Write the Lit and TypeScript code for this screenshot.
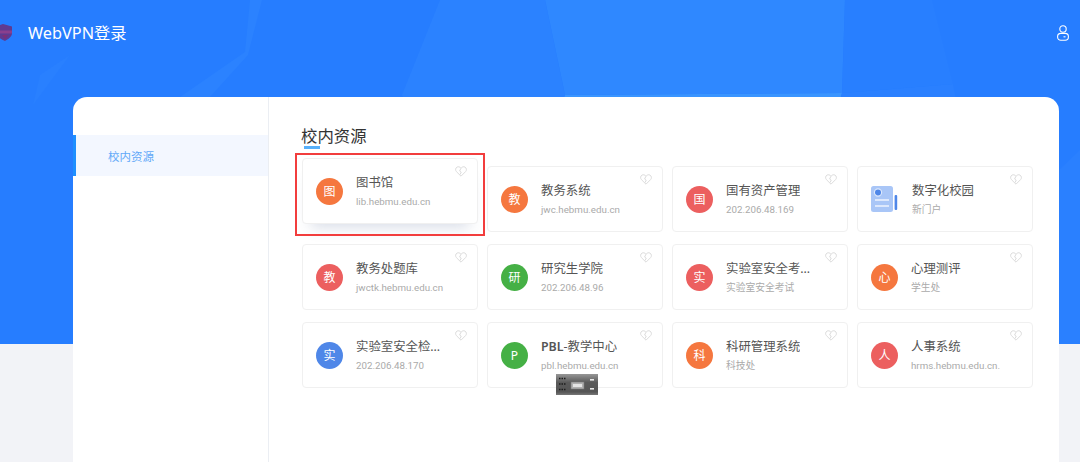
import { LitElement, html, css, svg } from "lit";
import { customElement } from "lit/decorators.js";

type Item = { title: string; sub: string; glyph?: string; color?: string; hover?: boolean; doc?: boolean; prefix?: string };

const O = "#f5773f", R = "#ec5f5f", B = "#4f87e8", G = "#45b045";
const items: Item[] = [
  { title: "图书馆", sub: "lib.hebmu.edu.cn", glyph: "图", color: O, hover: true },
  { title: "教务系统", sub: "jwc.hebmu.edu.cn", glyph: "教", color: O },
  { title: "国有资产管理", sub: "202.206.48.169", glyph: "国", color: R },
  { title: "数字化校园", sub: "新门户", doc: true },
  { title: "教务处题库", sub: "jwctk.hebmu.edu.cn", glyph: "教", color: R },
  { title: "研究生学院", sub: "202.206.48.96", glyph: "研", color: G },
  { title: "实验室安全考试", sub: "实验室安全考试", glyph: "实", color: R },
  { title: "心理测评", sub: "学生处", glyph: "心", color: O },
  { title: "实验室安全检查", sub: "202.206.48.170", glyph: "实", color: B },
  { title: "-教学中心", prefix: "PBL", sub: "pbl.hebmu.edu.cn", glyph: "P", color: G },
  { title: "科研管理系统", sub: "科技处", glyph: "科", color: O },
  { title: "人事系统", sub: "hrms.hebmu.edu.cn.", glyph: "人", color: R },
];

const heart = html`<svg class="heart" viewBox="0 0 12 11" width="12" height="11" fill="none" stroke="#dcdcdc" stroke-width="1">
  <path d="M6 10.2 1.4 5.6C.1 4.2.4 2 2 1.1 3.4.4 5 .8 6 2.2 7 .8 8.6.4 10 1.1c1.6.9 1.9 3.1.6 4.5Z"/>
  <path d="M6 2.2 4.6 5l1.6 1.2L5 8.6"/>
</svg>`;

const doc = html`<svg class="doc" viewBox="0 0 27 27" width="27" height="27">
  <rect x="0" y="0" width="22" height="26" rx="2.5" fill="#a9c6f7"/>
  <circle cx="7" cy="6.5" r="3.6" fill="#4f87e8" stroke="#dbe7fb" stroke-width="1.2"/>
  <rect x="4" y="13.2" width="14" height="1.6" fill="#eaf1fd"/>
  <rect x="4" y="19.2" width="14" height="1.6" fill="#eaf1fd"/>
  <rect x="23.6" y="9" width="2.6" height="15" rx="1" fill="#4f87e8"/>
</svg>`;

const bg = svg`
  <rect width="1080" height="344" fill="#267dff"/>
  <polygon points="565,95 842,93 827,146 542,146" fill="#3a95ff"/>
  <polygon points="545,0 845,0 842,93 565,95" fill="#2f88ff"/>
  <polygon points="440,0 545,0 565,95 402,95" fill="#2b82ff"/>
  <polygon points="402,95 565,95 542,146 427,146" fill="#2b82ff"/>
  <polygon points="842,93 953,84 965,146 827,146" fill="#2a80ff"/>
  <polygon points="845,0 932,0 953,84 842,93" fill="#287fff"/>
  <polygon points="250,0 262,0 248,55 210,97 180,97 245,52" fill="#2b82ff"/>
  <polygon points="33,105 70,55 40,75" fill="#2980ff"/>
  <polygon points="1059,170 1080,150 1080,344 1059,344" fill="#2a80ff"/>
`;

@customElement("app-root")
export class AppRoot extends LitElement {
  static styles = css`
    :host {
      display: flex;
      flex-direction: column;
      position: relative;
      height: 100vh;
      overflow: hidden;
      background: #f2f3f7;
      font-family: "Noto Sans", "Noto Sans CJK SC", sans-serif;
    }
    .hero { position: absolute; left: 0; top: 0; width: 100%; height: 344px; display: block; }
    header {
      position: relative;
      height: 97px;
      flex: none;
      box-sizing: border-box;
      padding: 23px 11px 0 0;
      display: flex;
      align-items: flex-start;
      color: #fff;
    }
    .logo { width: 13px; height: 17px; margin: 1px 15px 0 0; flex: none; }
    .brand { font-size: 16.3px; line-height: 18px; margin-top: 1px; }
    .user { margin-left: auto; width: 12px; height: 16px; margin-top: 2px; }
    .panel {
      position: relative;
      flex: 1;
      margin: 0 21px 0 73px;
      background: #fff;
      border-radius: 14px 14px 0 0;
      display: flex;
    }
    nav { width: 195px; flex: none; padding-top: 38px; border-right: 1px solid #ebeef3; }
    .nav-item {
      height: 41px;
      box-sizing: border-box;
      border-left: 3px solid #1e8fff;
      background: #f3f7ff;
      padding-left: 32px;
      display: flex;
      align-items: center;
      font-size: 11.5px;
      color: #62a9f8;
    }
    main { flex: 1; padding: 27px 0 0 33px; }
    h2 {
      margin: 0 0 0 -1px;
      width: max-content;
      font-size: 16.4px;
      line-height: 24px;
      font-weight: 400;
      color: #333;
      position: relative;
    }
    h2::after {
      content: "";
      position: absolute;
      left: 3px;
      bottom: -1px;
      width: 16px;
      height: 3px;
      background: #58b0fa;
    }
    .grid {
      margin-top: 18px;
      display: grid;
      grid-template-columns: repeat(4, 176px);
      grid-auto-rows: 66px;
      column-gap: 9px;
      row-gap: 12px;
    }
    .card {
      position: relative;
      box-sizing: border-box;
      border: 1px solid #f0f0f0;
      border-radius: 4px;
      background: #fff;
      display: flex;
      align-items: center;
      padding-left: 13px;
      gap: 13px;
    }
    .card.hover {
      transform: translateY(-8px);
      box-shadow: 0 12px 14px -9px rgba(70, 90, 140, .22);
    }
    .hover-mark {
      position: absolute;
      left: -8px;
      top: -6px;
      width: 190px;
      height: 83px;
      box-sizing: border-box;
      border: 2px solid #f23d3d;
      pointer-events: none;
    }
    .dot {
      width: 27px;
      height: 27px;
      flex: none;
      border-radius: 50%;
      color: #fff;
      font-size: 12px;
      display: flex;
      align-items: center;
      justify-content: center;
    }
    .doc { flex: none; margin-right: 1px; }
    .text { min-width: 0; display: flex; flex-direction: column; gap: 2px; }
    .title {
      max-width: 86px;
      font-size: 12.4px;
      line-height: 18px;
      color: #555;
      white-space: nowrap;
      overflow: hidden;
      text-overflow: ellipsis;
    }
    .title b { font-weight: 600; }
    .sub {
      font-family: Roboto, "Noto Sans CJK SC", sans-serif;
      font-size: 9.75px;
      line-height: 15px;
      color: #aaa;
      white-space: nowrap;
    }
    .heart { position: absolute; right: 10px; top: 7px; }
    .widget {
      position: absolute;
      left: 483px;
      top: 277px;
      width: 42px;
      height: 21px;
      background: linear-gradient(#979797, #5a5a5a 40%, #555 85%, #777);
      filter: blur(.35px);
    }
    .widget svg { display: block; }
  `;

  render() {
    return html`
      <svg class="hero" viewBox="0 0 1080 344" preserveAspectRatio="none">${bg}</svg>
      <header>
        <svg class="logo" viewBox="0 0 13 17">
          <path d="M-3 2 3 0l9 2.5v6.500c0 4-4 6-7 8-4-2-8-4-8-8Z" fill="#5f3a90"/>
          <path d="M-3 6.500h15v3H-3Z" fill="#8a3f8e"/>
          <path d="M2 11h6l-3 4Z" fill="#7c2f78"/>
        </svg>
        <div class="brand">WebVPN登录</div>
        <svg class="user" viewBox="0 0 12 16" fill="none" stroke="#fff" stroke-width="1.1">
          <circle cx="6" cy="4" r="3.2"/>
          <rect x=".6" y="8.400" width="10.800" height="6.800" rx="3.200"/>
          <path d="M6.500 11.800h2"/>
        </svg>
      </header>
      <section class="panel">
        <nav><div class="nav-item">校内资源</div></nav>
        <main>
          <h2>校内资源</h2>
          <div class="grid">
            ${items.map(
              (it) => html`
                <div class="card ${it.hover ? "hover" : ""}">
                  ${it.doc
                    ? doc
                    : html`<div class="dot" style="background:${it.color}">${it.glyph}</div>`}
                  <div class="text">
                    <div class="title">${it.prefix ? html`<b>${it.prefix}</b>` : ""}${it.title}</div>
                    <div class="sub">${it.sub}</div>
                  </div>
                  ${heart}
                  ${it.hover ? html`<div class="hover-mark"></div>` : ""}
                </div>
              `
            )}
          </div>
        </main>
        <div class="widget">
          <svg viewBox="0 0 42 21" width="42" height="21">
            <g stroke="#1c1c1c" stroke-width="1.300" stroke-dasharray="1.500 1">
              <path d="M3 4.500h7M3 10h7M3 15.500h7"/>
            </g>
            <rect x="15" y="8" width="13" height="7" fill="#b0b0b0" stroke="#777" stroke-width=".6"/>
            <rect x="17" y="10" width="9" height="3" fill="#e4e4e4"/>
            <rect x="34" y="5" width="4" height="1.600" fill="#e8e8e8"/>
            <rect x="34" y="14" width="4" height="1.600" fill="#e8e8e8"/>
          </svg>
        </div>
      </section>
    `;
  }
}
